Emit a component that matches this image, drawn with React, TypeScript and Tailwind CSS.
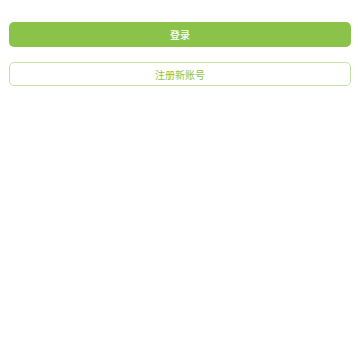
const App = () => {
  return (
    <div
      className="min-h-screen bg-white px-[9px] pt-[22px]"
      style={{ fontFamily: '"Noto Sans CJK SC", "Noto Sans", sans-serif' }}
    >
      <button className="flex h-[25px] w-full items-center justify-center rounded-[5px] bg-[#8bc34a] text-[10px] font-medium text-white">
        登录
      </button>
      <button className="mt-[15px] flex h-[24px] w-full items-center justify-center rounded-[5px] border border-[#c5e1a5] bg-white text-[10px] text-[#8bc34a]">
        注册新账号
      </button>
    </div>
  );
};

export default App;
